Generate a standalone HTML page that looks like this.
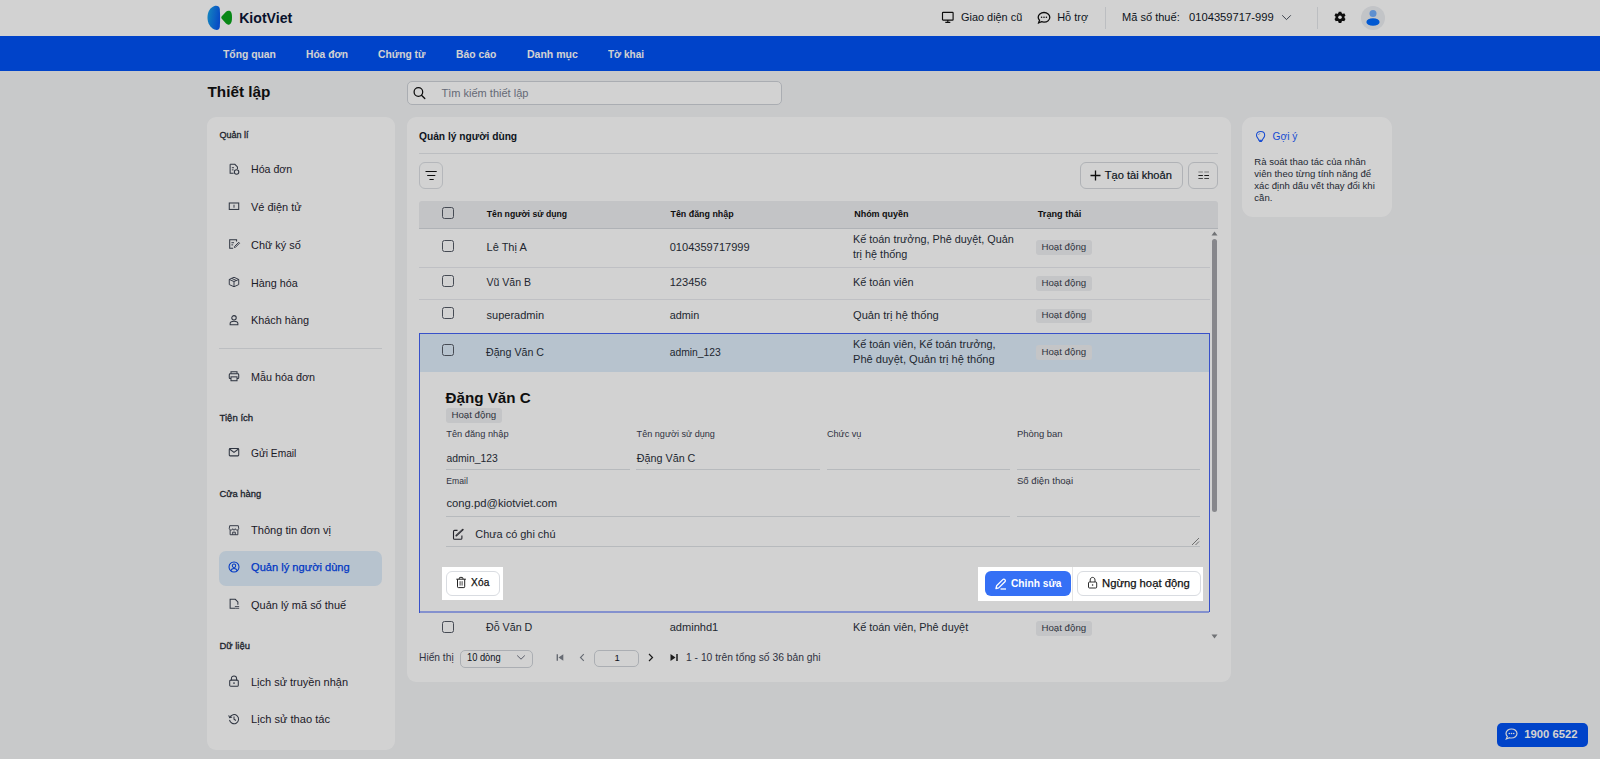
<!DOCTYPE html>
<html><head><meta charset="utf-8"><title>KiotViet - Quản lý người dùng</title>
<style>
html,body{margin:0;padding:0;width:1600px;height:759px;overflow:hidden;background:#f3f4f6}
body{position:relative;font-family:"Liberation Sans", sans-serif}
.t{position:absolute;white-space:nowrap;line-height:20px;height:20px}
svg{overflow:visible}
.bm{display:inline-block;width:0;height:0;vertical-align:baseline}
</style></head><body>
<div style="position:absolute;left:0px;top:0px;width:1600px;height:759px;background:#f3f4f6"></div>
<div style="position:absolute;left:0px;top:0px;width:1600px;height:36px;background:#ffffff"></div>
<svg style="position:absolute;left:207px;top:5px;" width="26" height="26" viewBox="0 0 26 26"><defs><linearGradient id="lg" x1="0" y1="0" x2="1" y2="0.3"><stop offset="0" stop-color="#1aa7e8"/><stop offset="1" stop-color="#0a5ef0"/></linearGradient></defs><path d="M7.5 1 C10 0.5 12.5 1 12.8 4 C13.2 9 13.2 17 12.8 22 C12.5 25 10 25.5 7.5 24.5 C3 22.5 0.5 18 0.5 12.5 C0.5 7 3 2.5 7.5 1 Z" fill="url(#lg)"/><path d="M22.5 5.8 C24.5 6.5 25 9 25 12.5 C25 16 24.5 18.5 22.5 19.5 C21 20 20 19.5 19 18.5 L15 14 C14 13 14 12 15 11 L19 6.8 C20 5.8 21 5.4 22.5 5.8 Z" fill="#0aa51a"/></svg>
<div class="t" style="left:239.20px;top:8.002px;font-size:14.1px;font-weight:bold;color:#0b1536;">KiotViet</div>
<svg style="position:absolute;left:941px;top:11px;" width="14" height="13" viewBox="0 0 14 13"><rect x="1.5" y="1.3" width="10.6" height="7.8" rx="0.6" fill="none" stroke="#111" stroke-width="1.15"/><path d="M6.8 9.1 V10.9 M4.3 11.4 H9.3" stroke="#111" stroke-width="1.15"/></svg>
<div class="t" style="left:961.00px;top:7.011px;font-size:10.92px;font-weight:normal;color:#111827;">Giao diện cũ</div>
<svg style="position:absolute;left:1037px;top:11px;" width="14" height="13" viewBox="0 0 14 13"><path d="M7 1.5 C10.3 1.5 12.8 3.6 12.8 6.3 C12.8 9 10.3 11.1 7 11.1 C6.1 11.1 5.3 11 4.6 10.7 L1.6 11.8 L2.5 9.3 C1.7 8.5 1.2 7.4 1.2 6.3 C1.2 3.6 3.7 1.5 7 1.5 Z" fill="none" stroke="#111" stroke-width="1.3"/><circle cx="4.6" cy="6.3" r="0.8" fill="#111"/><circle cx="7" cy="6.3" r="0.8" fill="#111"/><circle cx="9.4" cy="6.3" r="0.8" fill="#111"/></svg>
<div class="t" style="left:1057.20px;top:7.001px;font-size:10.95px;font-weight:normal;color:#111827;">Hỗ trợ</div>
<div style="position:absolute;left:1105px;top:7px;width:1px;height:22px;background:#e5e7eb"></div>
<div class="t" style="left:1122.00px;top:7.009px;font-size:11.06px;font-weight:normal;color:#111827;">Mã số thuế:</div>
<div class="t" style="left:1189.00px;top:7.008px;font-size:11.2px;font-weight:normal;color:#111827;">0104359717-999</div>
<svg style="position:absolute;left:1281px;top:14px;" width="11" height="7" viewBox="0 0 11 7"><path d="M1.2 1.3 L5.5 5.6 L9.8 1.3" fill="none" stroke="#3d4452" stroke-width="0.95"/></svg>
<div style="position:absolute;left:1317px;top:7px;width:1px;height:22px;background:#e5e7eb"></div>
<svg style="position:absolute;left:1333px;top:10px;" width="14" height="14" viewBox="0 0 14 14"><g transform="translate(7 7.3) rotate(90)"><path d="M3.84 -1.71 L5.65 -1.30 L5.65 1.30 L3.84 1.71 L3.40 2.47 L3.96 4.24 L1.70 5.55 L0.44 4.18 L-0.44 4.18 L-1.70 5.55 L-3.96 4.24 L-3.40 2.47 L-3.84 1.71 L-5.65 1.30 L-5.65 -1.30 L-3.84 -1.71 L-3.40 -2.47 L-3.96 -4.24 L-1.70 -5.55 L-0.44 -4.18 L0.44 -4.18 L1.70 -5.55 L3.96 -4.24 L3.40 -2.47 Z" fill="#111"/><circle r="4.3" fill="#111"/><circle r="1.8" fill="#fff"/></g></svg>
<div style="position:absolute;left:1361px;top:6px;width:24px;height:24px;background:#eceef2;border-radius:50%"></div>
<svg style="position:absolute;left:1361px;top:6px;" width="24" height="24" viewBox="0 0 24 24"><circle cx="12" cy="7.6" r="3.5" fill="#73aefc"/><ellipse cx="12" cy="16" rx="6.6" ry="3.8" fill="#006bff"/></svg>
<div style="position:absolute;left:0px;top:36px;width:1600px;height:35px;background:#0052f5"></div>
<div class="t" style="left:223.00px;top:44.013px;font-size:11.5px;font-weight:bold;color:#ffffff;transform:scaleX(0.9);transform-origin:0 0;">Tổng quan</div>
<div class="t" style="left:306.00px;top:44.013px;font-size:11.5px;font-weight:bold;color:#ffffff;transform:scaleX(0.8887);transform-origin:0 0;">Hóa đơn</div>
<div class="t" style="left:378.20px;top:44.013px;font-size:11.5px;font-weight:bold;color:#ffffff;transform:scaleX(0.893);transform-origin:0 0;">Chứng từ</div>
<div class="t" style="left:456.20px;top:44.013px;font-size:11.5px;font-weight:bold;color:#ffffff;transform:scaleX(0.8983);transform-origin:0 0;">Báo cáo</div>
<div class="t" style="left:526.70px;top:44.013px;font-size:11.5px;font-weight:bold;color:#ffffff;transform:scaleX(0.9139);transform-origin:0 0;">Danh mục</div>
<div class="t" style="left:608.30px;top:44.013px;font-size:11.5px;font-weight:bold;color:#ffffff;transform:scaleX(0.8696);transform-origin:0 0;">Tờ khai</div>
<div class="t" style="left:207.50px;top:82.008px;font-size:15.3px;font-weight:bold;color:#111;">Thiết lập</div>
<div style="position:absolute;left:407px;top:81px;width:375px;height:24px;box-sizing:border-box;border:1px solid #cfd3d9;border-radius:5px;background:#fff"></div>
<svg style="position:absolute;left:412px;top:86px;" width="15" height="15" viewBox="0 0 15 15"><circle cx="6.4" cy="6.0" r="4.3" fill="none" stroke="#111" stroke-width="1.25"/><path d="M9.5 9.2 L12.8 12.5" stroke="#111" stroke-width="1.3" stroke-linecap="round"/></svg>
<div class="t" style="left:441.50px;top:83.007px;font-size:11.02px;font-weight:normal;color:#7b8190;">Tìm kiếm thiết lập</div>
<div style="position:absolute;left:207px;top:117px;width:188px;height:633px;background:#fff;border-radius:9px"></div>
<div class="t" style="left:219.50px;top:125.010px;font-size:9.03px;font-weight:normal;color:#262b36;-webkit-text-stroke:0.3px #262b36;">Quản lí</div>
<div class="t" style="left:251.00px;top:159.014px;font-size:10.64px;font-weight:normal;color:#1f2430;">Hóa đơn</div>
<svg style="position:absolute;left:226px;top:160.5px;" width="16" height="16" viewBox="0 0 16 16"><g transform="translate(8 8) scale(0.86) translate(-8 -8)"><path d="M3.5 2.5 H9 L12 5.5 V8" fill="none" stroke="#3a4150" stroke-width="1.2"/><path d="M3.5 2.5 V13 H7.5" fill="none" stroke="#3a4150" stroke-width="1.2"/><path d="M5.5 6.5 H8 M5.5 9 H7.5" stroke="#3a4150" stroke-width="1.1"/><circle cx="11" cy="11.5" r="2.6" fill="none" stroke="#3a4150" stroke-width="1.2"/></g></svg>
<div class="t" style="left:251.00px;top:197.006px;font-size:10.98px;font-weight:normal;color:#1f2430;">Vé điện tử</div>
<svg style="position:absolute;left:226px;top:198.0px;" width="16" height="16" viewBox="0 0 16 16"><g transform="translate(8 8) scale(0.86) translate(-8 -8)"><rect x="2.5" y="4.5" width="11" height="7.5" fill="none" stroke="#3a4150" stroke-width="1.2"/><path d="M8 6.5 V10" stroke="#3a4150" stroke-width="1.1"/></g></svg>
<div class="t" style="left:251.00px;top:235.011px;font-size:10.92px;font-weight:normal;color:#1f2430;">Chữ ký số</div>
<svg style="position:absolute;left:226px;top:236.1px;" width="16" height="16" viewBox="0 0 16 16"><g transform="translate(8 8) scale(0.86) translate(-8 -8)"><path d="M11 5 V3 H3 V13 H7" fill="none" stroke="#3a4150" stroke-width="1.2"/><path d="M8.5 11 L13.5 6 L14.5 7 L9.5 12 H8.5 Z" fill="none" stroke="#3a4150" stroke-width="1.1"/><path d="M5 6.5 H8 M5 9 H7" stroke="#3a4150" stroke-width="1.1"/></g></svg>
<div class="t" style="left:251.00px;top:273.000px;font-size:10.77px;font-weight:normal;color:#1f2430;">Hàng hóa</div>
<svg style="position:absolute;left:226px;top:274.1px;" width="16" height="16" viewBox="0 0 16 16"><g transform="translate(8 8) scale(0.86) translate(-8 -8)"><path d="M8 2.5 L13.5 5 V11 L8 13.5 L2.5 11 V5 Z M2.5 5 L8 7.5 L13.5 5 M8 7.5 V13.5 M5.3 3.8 L10.8 6.3" fill="none" stroke="#3a4150" stroke-width="1.1" stroke-linejoin="round"/></g></svg>
<div class="t" style="left:251.00px;top:310.013px;font-size:10.87px;font-weight:normal;color:#1f2430;">Khách hàng</div>
<svg style="position:absolute;left:226px;top:311.5px;" width="16" height="16" viewBox="0 0 16 16"><g transform="translate(8 8) scale(0.86) translate(-8 -8)"><circle cx="8" cy="5.5" r="2.6" fill="none" stroke="#3a4150" stroke-width="1.2"/><path d="M3.5 13.5 V12 C3.5 10.5 5 9.5 8 9.5 C11 9.5 12.5 10.5 12.5 12 V13.5 Z" fill="none" stroke="#3a4150" stroke-width="1.2"/></g></svg>
<div style="position:absolute;left:219px;top:348px;width:163px;height:1px;background:#e5e7eb"></div>
<div class="t" style="left:251.00px;top:367.006px;font-size:10.8px;font-weight:normal;color:#1f2430;">Mẫu hóa đơn</div>
<svg style="position:absolute;left:226px;top:368.1px;" width="16" height="16" viewBox="0 0 16 16"><g transform="translate(8 8) scale(0.86) translate(-8 -8)"><path d="M4.5 5.5 V3 H11.5 V5.5" fill="none" stroke="#3a4150" stroke-width="1.2"/><rect x="2.5" y="5.5" width="11" height="5.5" rx="1" fill="none" stroke="#3a4150" stroke-width="1.2"/><rect x="4.5" y="9" width="7" height="4.5" fill="#fff" stroke="#3a4150" stroke-width="1.2"/></g></svg>
<div class="t" style="left:219.50px;top:408.010px;font-size:9.57px;font-weight:normal;color:#262b36;-webkit-text-stroke:0.3px #262b36;">Tiện ích</div>
<div class="t" style="left:251.00px;top:444.007px;font-size:10.21px;font-weight:normal;color:#1f2430;">Gửi Email</div>
<svg style="position:absolute;left:226px;top:444.4px;" width="16" height="16" viewBox="0 0 16 16"><g transform="translate(8 8) scale(0.86) translate(-8 -8)"><rect x="2.5" y="4" width="11" height="8.5" rx="1" fill="none" stroke="#3a4150" stroke-width="1.2"/><path d="M2.8 4.5 L8 8.5 L13.2 4.5" fill="none" stroke="#3a4150" stroke-width="1.2"/></g></svg>
<div class="t" style="left:219.50px;top:484.010px;font-size:9.39px;font-weight:normal;color:#262b36;-webkit-text-stroke:0.3px #262b36;">Cửa hàng</div>
<div class="t" style="left:251.00px;top:520.011px;font-size:11.1px;font-weight:normal;color:#1f2430;">Thông tin đơn vị</div>
<svg style="position:absolute;left:226px;top:521.6px;" width="16" height="16" viewBox="0 0 16 16"><g transform="translate(8 8) scale(0.86) translate(-8 -8)"><path d="M3 3 H13 L13.5 6.5 C13.5 7.5 12.5 8 11.5 8 C10.5 8 9.5 7.5 9.5 6.5 C9.5 7.5 8.8 8 8 8 C7.2 8 6.5 7.5 6.5 6.5 C6.5 7.5 5.5 8 4.5 8 C3.5 8 2.5 7.5 2.5 6.5 Z" fill="none" stroke="#3a4150" stroke-width="1.1"/><path d="M3.5 8 V13.5 H12.5 V8 M6.5 13.5 V10.5 H9.5 V13.5" fill="none" stroke="#3a4150" stroke-width="1.1"/></g></svg>
<div style="position:absolute;left:219px;top:551px;width:163px;height:35px;background:#dfedfa;border-radius:7px"></div>
<div class="t" style="left:251.00px;top:557.008px;font-size:11.11px;font-weight:normal;color:#0044ee;-webkit-text-stroke:0.25px #0044ee;">Quản lý người dùng</div>
<svg style="position:absolute;left:226px;top:558.7px;" width="16" height="16" viewBox="0 0 16 16"><g transform="translate(8 8) scale(0.86) translate(-8 -8)"><circle cx="8" cy="8" r="5.8" fill="none" stroke="#0044ee" stroke-width="1.2"/><circle cx="8" cy="6.5" r="2" fill="none" stroke="#0044ee" stroke-width="1.2"/><path d="M4.3 12.3 C5 10.6 6.3 9.8 8 9.8 C9.7 9.8 11 10.6 11.7 12.3" fill="none" stroke="#0044ee" stroke-width="1.2"/></g></svg>
<div class="t" style="left:251.00px;top:595.006px;font-size:10.98px;font-weight:normal;color:#1f2430;">Quản lý mã số thuế</div>
<svg style="position:absolute;left:226px;top:596.4px;" width="16" height="16" viewBox="0 0 16 16"><g transform="translate(8 8) scale(0.86) translate(-8 -8)"><path d="M9.5 13 H3.5 V2.5 H9.5 L12.5 5.5 V9" fill="none" stroke="#3a4150" stroke-width="1.2"/><path d="M9 11 H14 M9.5 13 H14" stroke="#3a4150" stroke-width="1"/></g></svg>
<div class="t" style="left:219.50px;top:636.005px;font-size:9.45px;font-weight:normal;color:#262b36;-webkit-text-stroke:0.3px #262b36;">Dữ liệu</div>
<div class="t" style="left:251.00px;top:672.009px;font-size:10.97px;font-weight:normal;color:#1f2430;">Lịch sử truyền nhận</div>
<svg style="position:absolute;left:226px;top:673.3px;" width="16" height="16" viewBox="0 0 16 16"><g transform="translate(8 8) scale(0.86) translate(-8 -8)"><rect x="3" y="7" width="10" height="7" rx="1.2" fill="none" stroke="#3a4150" stroke-width="1.2"/><path d="M5 7 V5 C5 3.2 6.3 2.2 8 2.2 C9.7 2.2 11 3.2 11 5 V7" fill="none" stroke="#3a4150" stroke-width="1.2"/><path d="M8 9.5 V11.5" stroke="#3a4150" stroke-width="1.4"/></g></svg>
<div class="t" style="left:251.00px;top:709.011px;font-size:11.1px;font-weight:normal;color:#1f2430;">Lịch sử thao tác</div>
<svg style="position:absolute;left:226px;top:710.7px;" width="16" height="16" viewBox="0 0 16 16"><g transform="translate(8 8) scale(0.86) translate(-8 -8)"><path d="M3.2 6 A5.3 5.3 0 1 1 2.8 9" fill="none" stroke="#3a4150" stroke-width="1.2"/><path d="M1.8 3.8 L3 6.5 L5.8 5.6" fill="none" stroke="#3a4150" stroke-width="1.2"/><path d="M8 5 V8.3 L10.2 9.8" fill="none" stroke="#3a4150" stroke-width="1.2"/></g></svg>
<div style="position:absolute;left:407px;top:117px;width:824px;height:565px;background:#fff;border-radius:9px"></div>
<div class="t" style="left:419.00px;top:127.004px;font-size:10.22px;font-weight:bold;color:#111827;">Quản lý người dùng</div>
<div style="position:absolute;left:419px;top:153px;width:799px;height:1px;background:#e5e7eb"></div>
<div style="position:absolute;left:419px;top:162px;width:24px;height:27px;box-sizing:border-box;border:1px solid #dcdfe4;border-radius:6px"></div>
<svg style="position:absolute;left:419px;top:162px;" width="24" height="27" viewBox="0 0 24 27"><path d="M6.5 9.5 H17.7 M8.2 13.5 H16.3 M10.5 17.5 H14.7" stroke="#111" stroke-width="1.05"/></svg>
<div style="position:absolute;left:1080px;top:162px;width:103px;height:27px;box-sizing:border-box;border:1px solid #d6d9de;border-radius:6px"></div>
<svg style="position:absolute;left:1089px;top:169px;" width="13" height="13" viewBox="0 0 13 13"><path d="M6.5 1.5 V11.5 M1.5 6.5 H11.5" stroke="#111" stroke-width="1.3"/></svg>
<div class="t" style="left:1104.80px;top:165.006px;font-size:11.07px;font-weight:normal;color:#111827;-webkit-text-stroke:0.2px #111827;">Tạo tài khoản</div>
<div style="position:absolute;left:1188px;top:162px;width:30px;height:27px;box-sizing:border-box;border:1px solid #d6d9de;border-radius:6px"></div>
<svg style="position:absolute;left:1188px;top:162px;" width="30" height="27" viewBox="0 0 30 27"><path d="M10.4 10 H14.9 M16.3 10 H21" stroke="#999" stroke-width="1"/><path d="M10.4 13.5 H14.9 M16.3 13.5 H21" stroke="#222" stroke-width="1"/><path d="M10.4 16.5 H14.9 M16.3 16.5 H21" stroke="#555" stroke-width="1"/></svg>
<div style="position:absolute;left:419px;top:201px;width:799px;height:28px;border-radius:3px 3px 0 0;background:#edeef1;border-bottom:1px solid #d5d8dd;box-sizing:border-box"></div>
<div style="position:absolute;left:442px;top:206.5px;width:12px;height:12px;box-sizing:border-box;border:1.2px solid #555b66;border-radius:2.5px"></div>
<div class="t" style="left:486.80px;top:204.013px;font-size:8.66px;font-weight:bold;color:#111;">Tên người sử dụng</div>
<div class="t" style="left:670.50px;top:204.008px;font-size:8.9px;font-weight:bold;color:#111;">Tên đăng nhập</div>
<div class="t" style="left:854.20px;top:204.012px;font-size:8.98px;font-weight:bold;color:#111;">Nhóm quyền</div>
<div class="t" style="left:1037.80px;top:204.010px;font-size:9.12px;font-weight:bold;color:#111;">Trạng thái</div>
<div style="position:absolute;left:419px;top:267px;width:791px;height:1px;background:#e8eaee"></div>
<div style="position:absolute;left:442px;top:239.5px;width:12px;height:12px;box-sizing:border-box;border:1.2px solid #555b66;border-radius:2.5px"></div>
<div class="t" style="left:486.50px;top:237.001px;font-size:11.04px;font-weight:normal;color:#2a303b;">Lê Thị A</div>
<div class="t" style="left:669.70px;top:237.006px;font-size:11.07px;font-weight:normal;color:#2a303b;">0104359717999</div>
<div class="t" style="left:853.00px;top:229.004px;font-size:10.85px;font-weight:normal;color:#2a303b;">Kế toán trưởng, Phê duyệt, Quản</div>
<div class="t" style="left:853.00px;top:244.004px;font-size:10.85px;font-weight:normal;color:#2a303b;">trị hệ thống</div>
<div style="position:absolute;left:1036px;top:240.3px;width:56px;height:14.5px;background:#eef0f2;border-radius:3px"></div>
<div class="t" style="left:1041.50px;top:237.015px;font-size:9.69px;font-weight:normal;color:#3b414d;">Hoạt động</div>
<div style="position:absolute;left:419px;top:299px;width:791px;height:1px;background:#e8eaee"></div>
<div style="position:absolute;left:442px;top:274.5px;width:12px;height:12px;box-sizing:border-box;border:1.2px solid #555b66;border-radius:2.5px"></div>
<div class="t" style="left:486.50px;top:272.005px;font-size:10.53px;font-weight:normal;color:#2a303b;">Vũ Văn B</div>
<div class="t" style="left:669.70px;top:272.014px;font-size:11.09px;font-weight:normal;color:#2a303b;">123456</div>
<div class="t" style="left:853.00px;top:272.002px;font-size:10.9px;font-weight:normal;color:#2a303b;">Kế toán viên</div>
<div style="position:absolute;left:1036px;top:276px;width:56px;height:14.5px;background:#eef0f2;border-radius:3px"></div>
<div class="t" style="left:1041.50px;top:273.015px;font-size:9.69px;font-weight:normal;color:#3b414d;">Hoạt động</div>
<div style="position:absolute;left:442px;top:307.3px;width:12px;height:12px;box-sizing:border-box;border:1.2px solid #555b66;border-radius:2.5px"></div>
<div class="t" style="left:486.50px;top:305.007px;font-size:11.02px;font-weight:normal;color:#2a303b;">superadmin</div>
<div class="t" style="left:669.70px;top:305.011px;font-size:10.83px;font-weight:normal;color:#2a303b;">admin</div>
<div class="t" style="left:853.00px;top:305.011px;font-size:11.1px;font-weight:normal;color:#2a303b;">Quản trị hệ thống</div>
<div style="position:absolute;left:1036px;top:308.5px;width:56px;height:14.5px;background:#eef0f2;border-radius:3px"></div>
<div class="t" style="left:1041.50px;top:305.015px;font-size:9.69px;font-weight:normal;color:#3b414d;">Hoạt động</div>
<div style="position:absolute;left:419px;top:333px;width:791px;height:1px;background:#4463f5"></div>
<div style="position:absolute;left:419px;top:333px;width:1px;height:280px;background:#4463f5"></div>
<div style="position:absolute;left:1209px;top:333px;width:1px;height:279px;background:#4463f5"></div>
<div style="position:absolute;left:420px;top:611px;width:789px;height:2px;background:rgba(68,99,245,0.5)"></div>
<div style="position:absolute;left:420px;top:334px;width:789px;height:38px;background:#dfedfa"></div>
<div style="position:absolute;left:442px;top:344px;width:12px;height:12px;box-sizing:border-box;border:1.2px solid #555b66;border-radius:2.5px"></div>
<div class="t" style="left:486.00px;top:342.011px;font-size:10.65px;font-weight:normal;color:#2a303b;">Đặng Văn C</div>
<div class="t" style="left:669.70px;top:343.012px;font-size:10.33px;font-weight:normal;color:#2a303b;">admin_123</div>
<div class="t" style="left:853.00px;top:334.011px;font-size:10.83px;font-weight:normal;color:#2a303b;">Kế toán viên, Kế toán trưởng,</div>
<div class="t" style="left:853.00px;top:349.002px;font-size:11.08px;font-weight:normal;color:#2a303b;">Phê duyệt, Quản trị hệ thống</div>
<div style="position:absolute;left:1036px;top:345px;width:56px;height:14.5px;background:#eef0f2;border-radius:3px"></div>
<div class="t" style="left:1041.50px;top:342.015px;font-size:9.69px;font-weight:normal;color:#3b414d;">Hoạt động</div>
<div class="t" style="left:445.50px;top:388.011px;font-size:15.2px;font-weight:bold;color:#111;">Đặng Văn C</div>
<div style="position:absolute;left:446px;top:408.3px;width:56px;height:14.5px;background:#eef0f2;border-radius:3px"></div>
<div class="t" style="left:451.50px;top:405.015px;font-size:9.69px;font-weight:normal;color:#3b414d;">Hoạt động</div>
<div class="t" style="left:446.30px;top:424.008px;font-size:9.26px;font-weight:normal;color:#3a4050;">Tên đăng nhập</div>
<div class="t" style="left:446.50px;top:449.005px;font-size:10.35px;font-weight:normal;color:#2a303b;">admin_123</div>
<div style="position:absolute;left:446px;top:469px;width:183.5px;height:1px;background:#dfe2e6"></div>
<div class="t" style="left:636.60px;top:424.013px;font-size:9.11px;font-weight:normal;color:#3a4050;">Tên người sử dụng</div>
<div class="t" style="left:636.80px;top:448.004px;font-size:10.76px;font-weight:normal;color:#2a303b;">Đặng Văn C</div>
<div style="position:absolute;left:636.3px;top:469px;width:183.5px;height:1px;background:#dfe2e6"></div>
<div class="t" style="left:826.90px;top:424.010px;font-size:9.12px;font-weight:normal;color:#3a4050;">Chức vụ</div>
<div style="position:absolute;left:826.6px;top:469px;width:183.5px;height:1px;background:#dfe2e6"></div>
<div class="t" style="left:1016.90px;top:424.012px;font-size:9.43px;font-weight:normal;color:#3a4050;">Phòng ban</div>
<div style="position:absolute;left:1016.6px;top:469px;width:183.5px;height:1px;background:#dfe2e6"></div>
<div class="t" style="left:446.30px;top:471.003px;font-size:8.6px;font-weight:normal;color:#3a4050;">Email</div>
<div class="t" style="left:446.50px;top:493.009px;font-size:11.24px;font-weight:normal;color:#2a303b;">cong.pd@kiotviet.com</div>
<div style="position:absolute;left:446px;top:516px;width:564px;height:1px;background:#dfe2e6"></div>
<div class="t" style="left:1016.90px;top:471.005px;font-size:9.63px;font-weight:normal;color:#3a4050;">Số điện thoại</div>
<div style="position:absolute;left:1016.6px;top:516px;width:183.5px;height:1px;background:#dfe2e6"></div>
<div style="position:absolute;left:446px;top:546px;width:754px;height:1px;background:#dfe2e6"></div>
<svg style="position:absolute;left:451px;top:527px;" width="15" height="15" viewBox="0 0 15 15"><path d="M6.5 3.4 H3.6 Q2.5 3.4 2.5 4.5 V11.2 Q2.5 12.3 3.6 12.3 H9.8 Q10.9 12.3 10.9 11.2 V8.6" fill="none" stroke="#2a2a33" stroke-width="1.1"/><path d="M5.3 8.7 L11.8 2.6" stroke="#2a2a33" stroke-width="1.7" stroke-linecap="round"/><path d="M5.6 8.5 L11.5 2.9" stroke="#bbb" stroke-width="0.4"/></svg>
<div class="t" style="left:475.30px;top:524.007px;font-size:10.93px;font-weight:normal;color:#2a303b;">Chưa có ghi chú</div>
<svg style="position:absolute;left:1191px;top:537px;" width="9" height="9" viewBox="0 0 9 9"><path d="M1 8 L8 1 M4.5 8 L8 4.5" stroke="#777" stroke-width="0.9"/></svg>
<div style="position:absolute;left:442px;top:620.8px;width:12px;height:12px;box-sizing:border-box;border:1.2px solid #555b66;border-radius:2.5px"></div>
<div class="t" style="left:486.00px;top:617.000px;font-size:10.68px;font-weight:normal;color:#2a303b;">Đỗ Văn D</div>
<div class="t" style="left:669.70px;top:617.006px;font-size:11.07px;font-weight:normal;color:#2a303b;">adminhd1</div>
<div class="t" style="left:853.00px;top:617.004px;font-size:10.85px;font-weight:normal;color:#2a303b;">Kế toán viên, Phê duyệt</div>
<div style="position:absolute;left:1036px;top:621px;width:56px;height:14.5px;background:#eef0f2;border-radius:3px"></div>
<div class="t" style="left:1041.50px;top:618.015px;font-size:9.69px;font-weight:normal;color:#3b414d;">Hoạt động</div>
<svg style="position:absolute;left:1210px;top:229px;" width="9" height="10" viewBox="0 0 9 10"><path d="M4.5 2.5 L7.5 6.5 H1.5 Z" fill="#8a8c90"/></svg>
<div style="position:absolute;left:1212px;top:239px;width:5px;height:273px;background:#a4a5aa;border-radius:3px"></div>
<svg style="position:absolute;left:1210px;top:631px;" width="9" height="10" viewBox="0 0 9 10"><path d="M4.5 7.5 L7.5 3.5 H1.5 Z" fill="#8a8c90"/></svg>
<div class="t" style="left:419.00px;top:648.016px;font-size:10.23px;font-weight:normal;color:#3a4050;">Hiển thị</div>
<div style="position:absolute;left:460px;top:650px;width:73px;height:18px;box-sizing:border-box;border:1px solid #d0d4da;border-radius:5px"></div>
<div class="t" style="left:467.20px;top:648.007px;font-size:10.3px;font-weight:normal;color:#111827;transform:scaleX(0.903);transform-origin:0 0;">10 dòng</div>
<svg style="position:absolute;left:516px;top:654px;" width="10" height="7" viewBox="0 0 10 7"><path d="M1.2 1.5 L5 5.2 L8.8 1.5" fill="none" stroke="#5a6070" stroke-width="0.9"/></svg>
<svg style="position:absolute;left:555px;top:653px;" width="10" height="9" viewBox="0 0 10 9"><path d="M2.3 1.2 V7.8" stroke="#7d828c" stroke-width="1.4"/><path d="M8.3 1.2 L3.5 4.5 L8.3 7.8 Z" fill="#7d828c"/></svg>
<svg style="position:absolute;left:578px;top:653px;" width="8" height="9" viewBox="0 0 8 9"><path d="M5.8 1.2 L2.5 4.5 L5.8 7.8" fill="none" stroke="#7d828c" stroke-width="1.1"/></svg>
<div style="position:absolute;left:594px;top:650px;width:45px;height:17px;box-sizing:border-box;border:1px solid #d0d4da;border-radius:5px"></div>
<div class="t" style="left:614.50px;top:648.003px;font-size:9.5px;font-weight:normal;color:#111827;">1</div>
<svg style="position:absolute;left:647px;top:653px;" width="8" height="9" viewBox="0 0 8 9"><path d="M2 1 L5.5 4.5 L2 8" fill="none" stroke="#222" stroke-width="1.2"/></svg>
<svg style="position:absolute;left:669px;top:653px;" width="10" height="9" viewBox="0 0 10 9"><path d="M8 1 V8" stroke="#222" stroke-width="1.5"/><path d="M1.5 1 L6.5 4.5 L1.5 8 Z" fill="#222"/></svg>
<div class="t" style="left:686.00px;top:648.007px;font-size:10.3px;font-weight:normal;color:#3a4050;">1 - 10 trên tổng số 36 bản ghi</div>
<div style="position:absolute;left:1242px;top:117px;width:150px;height:100px;background:#fff;border-radius:11px"></div>
<svg style="position:absolute;left:1254px;top:129px;" width="13" height="15" viewBox="0 0 13 15"><path d="M6.6 2.4 C8.9 2.4 10.7 4 10.7 6.2 C10.7 7.6 10 8.5 9.3 9.3 C8.8 9.9 8.4 10.5 8.4 11.2 H4.8 C4.8 10.5 4.4 9.9 3.9 9.3 C3.2 8.5 2.5 7.6 2.5 6.2 C2.5 4 4.3 2.4 6.6 2.4 Z" fill="none" stroke="#1a5bff" stroke-width="1.05"/><rect x="5" y="11.3" width="3.2" height="1.8" rx="0.8" fill="#1a5bff"/><path d="M4.5 5.8 L5.9 4.4" stroke="#1a5bff" stroke-width="0.8"/></svg>
<div class="t" style="left:1272.50px;top:127.016px;font-size:10.23px;font-weight:normal;color:#1a5bff;">Gợi ý</div>
<div class="t" style="left:1254.30px;top:152.002px;font-size:9.55px;font-weight:normal;color:#2b3140;">Rà soát thao tác của nhân</div>
<div class="t" style="left:1254.30px;top:164.002px;font-size:9.55px;font-weight:normal;color:#2b3140;">viên theo từng tính năng để</div>
<div class="t" style="left:1254.30px;top:176.002px;font-size:9.55px;font-weight:normal;color:#2b3140;">xác định dấu vết thay đổi khi</div>
<div class="t" style="left:1254.30px;top:188.002px;font-size:9.55px;font-weight:normal;color:#2b3140;">cần.</div>
<div style="position:absolute;left:1497px;top:723px;width:91px;height:24px;background:#0052f5;border-radius:5px"></div>
<svg style="position:absolute;left:1505px;top:728px;" width="13" height="12" viewBox="0 0 13 12"><path d="M6.5 1 C9.5 1 12 3 12 5.5 C12 8 9.5 10 6.5 10 C5.8 10 5.1 9.9 4.5 9.7 L1.3 11 L2.3 8.5 C1.5 7.7 1 6.7 1 5.5 C1 3 3.5 1 6.5 1 Z" fill="none" stroke="#fff" stroke-width="1.2"/><circle cx="4.3" cy="5.5" r="0.8" fill="#fff"/><circle cx="6.5" cy="5.5" r="0.8" fill="#fff"/><circle cx="8.7" cy="5.5" r="0.8" fill="#fff"/></svg>
<div class="t" style="left:1524.20px;top:724.011px;font-size:11.28px;font-weight:bold;color:#fff;">1900 6522</div>
<div style="position:absolute;left:0px;top:0px;width:1600px;height:759px;background:rgba(0,0,0,0.176);z-index:50"></div>
<div style="position:absolute;left:442px;top:567px;width:61px;height:33px;z-index:60;background:#fff"></div>
<div style="position:absolute;left:446px;top:571px;width:54px;height:25px;z-index:60;box-sizing:border-box;border:1px solid #d9dce1;border-radius:6px;background:#fff"></div>
<svg style="position:absolute;left:455px;top:576px;z-index:60;" width="12" height="13" viewBox="0 0 12 13"><path d="M1.3 3.2 H10.9 M4.3 3.2 V2.2 Q4.3 1.4 5.1 1.4 H7.1 Q7.9 1.4 7.9 2.2 V3.2" fill="none" stroke="#222" stroke-width="1"/><path d="M2.5 3.2 V10.8 Q2.5 11.6 3.3 11.6 H8.9 Q9.7 11.6 9.7 10.8 V3.2" fill="none" stroke="#222" stroke-width="1"/><path d="M5.1 5.2 V9.6 M7.1 5.2 V9.6" stroke="#333" stroke-width="0.9"/></svg>
<div class="t" style="left:471.00px;top:573.014px;font-size:10.1px;font-weight:normal;color:#111;z-index:60;-webkit-text-stroke:0.25px #111;letter-spacing:0.2px;">Xóa</div>
<div style="position:absolute;left:978px;top:567px;width:94px;height:34px;z-index:60;background:#fff"></div>
<div style="position:absolute;left:1073px;top:567px;width:130px;height:34px;z-index:60;background:#fff"></div>
<div style="position:absolute;left:1072px;top:567px;width:1px;height:34px;z-index:60;background:#e6e6e6"></div>
<div style="position:absolute;left:985px;top:571px;width:86px;height:25px;z-index:60;background:#3570f5;border-radius:6px"></div>
<svg style="position:absolute;left:994px;top:577px;z-index:60;" width="14" height="13" viewBox="0 0 14 13"><path d="M2 11.5 L2.6 8.8 L8.8 2.6 C9.4 2 10.3 2 10.9 2.6 C11.5 3.2 11.5 4.1 10.9 4.7 L4.7 10.9 Z" fill="none" stroke="#fff" stroke-width="1.3" stroke-linejoin="round"/><path d="M6.5 12 H12" stroke="#fff" stroke-width="1.3"/></svg>
<div class="t" style="left:1010.50px;top:573.008px;font-size:11.2px;font-weight:bold;color:#fff;transform:scaleX(0.912);transform-origin:0 0;z-index:60;">Chỉnh sửa</div>
<div style="position:absolute;left:1077px;top:571px;width:124px;height:25px;z-index:60;box-sizing:border-box;border:1px solid #d9dce1;border-radius:6px;background:#fff"></div>
<svg style="position:absolute;left:1087px;top:576px;z-index:60;" width="11" height="13" viewBox="0 0 11 13"><rect x="1.5" y="6" width="8.2" height="6" rx="1" fill="none" stroke="#222" stroke-width="0.95"/><path d="M3.2 6 V4 C3.2 2.4 4.2 1.4 5.6 1.4 C7 1.4 8 2.4 8 4 V6" fill="none" stroke="#222" stroke-width="0.95"/><circle cx="5.6" cy="9" r="0.8" fill="#222"/></svg>
<div class="t" style="left:1102.00px;top:573.011px;font-size:11.28px;font-weight:normal;color:#111;z-index:60;-webkit-text-stroke:0.25px #111;">Ngừng hoạt động</div>
</body></html>
